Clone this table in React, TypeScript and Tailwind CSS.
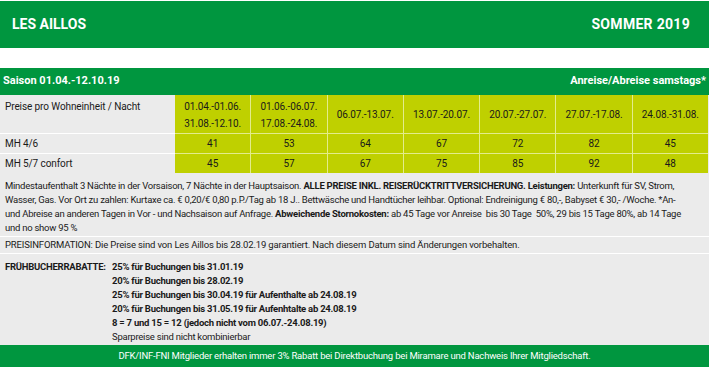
import React from "react";

const cols = [
  { top: "01.04.-01.06.", bottom: "31.08.-12.10.", a: "41", b: "45" },
  { top: "01.06.-06.07.", bottom: "17.08.-24.08.", a: "53", b: "57" },
  { top: "06.07.-13.07.", a: "64", b: "67" },
  { top: "13.07.-20.07.", a: "67", b: "75" },
  { top: "20.07.-27.07.", a: "72", b: "85" },
  { top: "27.07.-17.08.", a: "82", b: "92" },
  { top: "24.08.-31.08.", a: "45", b: "48" },
];

export default function App() {
  return (
    <div className="w-[709px] h-[374px] bg-white font-['Roboto',sans-serif] text-[10px] text-[#1a1a1a] overflow-hidden">
      <div className="h-px" />
      <div className="h-[47px] bg-[#00963f] flex items-center justify-between pl-[12px] pr-[19px] text-white font-bold text-[14px]">
        <span>LES AILLOS</span>
        <span className="tracking-[0.3px]">SOMMER 2019</span>
      </div>
      <div className="h-[20px]" />
      <div className="h-[27px] bg-[#00963f] flex items-center justify-between pl-[3px] pr-[3px] text-white font-bold text-[11px]">
        <span>Saison 01.04.-12.10.19</span>
        <span>Anreise/Abreise samstags*</span>
      </div>
      <div className="flex w-[709px] tracking-[-0.1px]">
        <div className="w-[175px] bg-[#ebebeb] flex flex-col">
          <div className="h-[39px] border-b border-white px-[5px] pt-[4px]">Preise pro Wohneinheit / Nacht</div>
          <div className="h-[20px] border-b border-white px-[5px] flex items-center">MH 4/6</div>
          <div className="h-[19px] px-[5px] flex items-center">MH 5/7 confort</div>
        </div>
        {cols.map((c, i) => (
          <div
            key={i}
            className={`flex-1 bg-[#bfd000] flex flex-col text-center ${i > 0 ? "border-l border-[#e3ec8c]" : ""}`}
          >
            {c.bottom ? (
              <div className="h-[39px] border-b border-[#e3ec8c] flex flex-col">
                <div className="h-[20px] flex items-end justify-center pb-[1px]">{c.top}</div>
                <div className="h-[19px] flex items-center justify-center">{c.bottom}</div>
              </div>
            ) : (
              <div className="h-[39px] border-b border-[#e3ec8c] flex items-center justify-center">{c.top}</div>
            )}
            <div className="h-[20px] border-b border-[#e3ec8c] flex items-center justify-center">{c.a}</div>
            <div className="h-[19px] flex items-center justify-center">{c.b}</div>
          </div>
        ))}
        <div className="w-px bg-[#ebebeb]" />
      </div>
      <div className="bg-[#ebebeb] leading-[14px] text-[9.5px] tracking-[-0.25px] whitespace-nowrap">
        <div className="px-[5px] pt-[6px] pb-[1px] border-b border-white">
          Mindestaufenthalt 3 Nächte in der Vorsaison, 7 Nächte in der Hauptsaison. <b>ALLE PREISE INKL. REISERÜCKTRITTVERSICHERUNG. Leistungen:</b> Unterkunft für SV, Strom,
          <br />
          Wasser, Gas. Vor Ort zu zahlen: Kurtaxe ca. € 0,20/€ 0,80 p.P./Tag ab 18 J.. Bettwäsche und Handtücher leihbar. Optional: Endreinigung € 80,-, Babyset € 30,- /Woche. *An-
          <br />
          und Abreise an anderen Tagen in Vor - und Nachsaison auf Anfrage. <b>Abweichende Stornokosten:</b> ab 45 Tage vor Anreise&nbsp; bis 30 Tage&nbsp; 50%, 29 bis 15 Tage 80%, ab 14 Tage
          <br />
          und no show 95 %
        </div>
        <div className="px-[5px] py-[1px] border-b border-white tracking-[-0.15px]">
          PREISINFORMATION: Die Preise sind von Les Aillos bis 28.02.19 garantiert. Nach diesem Datum sind Änderungen vorbehalten.
        </div>
        <div className="flex px-[5px] pt-[6px] pb-px">
          <div className="w-[107px] font-bold">FRÜHBUCHERRABATTE:</div>
          <div>
            <div className="font-bold">25% für Buchungen bis 31.01.19</div>
            <div className="font-bold">20% für Buchungen bis 28.02.19</div>
            <div className="font-bold">25% für Buchungen bis 30.04.19 für Aufenthalte ab 24.08.19</div>
            <div className="font-bold">20% für Buchungen bis 31.05.19 für Aufenhtalte ab 24.08.19</div>
            <div className="font-bold">8 = 7 und 15 = 12 (jedoch nicht vom 06.07.-24.08.19)</div>
            <div>Sparpreise sind nicht kombinierbar</div>
          </div>
        </div>
      </div>
      <div className="h-[22px] bg-[#00963f] flex items-center justify-center text-white text-[9.5px] tracking-[-0.2px] whitespace-nowrap">
        DFK/INF-FNI Mitglieder erhalten immer 3% Rabatt bei Direktbuchung bei Miramare und Nachweis Ihrer Mitgliedschaft.
      </div>
    </div>
  );
}
